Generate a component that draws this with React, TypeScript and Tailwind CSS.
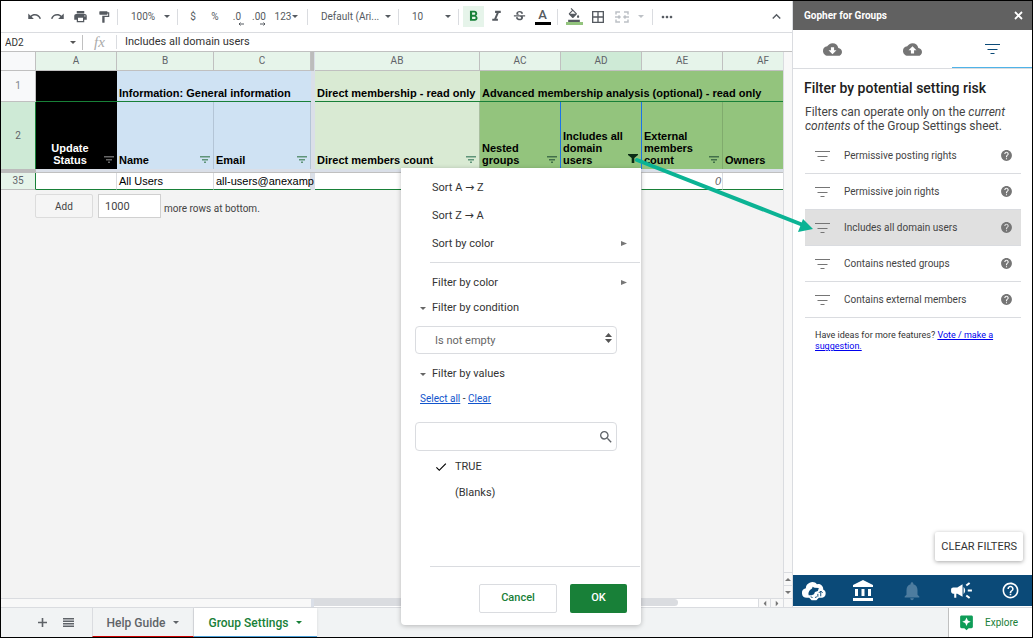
import { ReactNode } from "react";
import clsx from "clsx";
import {
  MdUndo,
  MdRedo,
  MdPrint,
  MdFormatPaint,
  MdFormatBold,
  MdFormatItalic,
  MdStrikethroughS,
  MdFormatColorFill,
  MdBorderAll,
  MdMoreHoriz,
  MdKeyboardArrowUp,
  MdCloudDownload,
  MdCloudUpload,
  MdHelp,
  MdHelpOutline,
  MdAccountBalance,
  MdNotifications,
  MdCampaign,
  MdAssistant,
  MdSearch,
  MdCheck,
} from "react-icons/md";

const risks = [
  "Permissive posting rights",
  "Permissive join rights",
  "Includes all domain users",
  "Contains nested groups",
  "Contains external members",
];

function Caret({ className }: { className?: string }) {
  return (
    <svg viewBox="0 0 6 3" className={clsx("h-[3px] w-[6px] shrink-0 pointer-events-none", className)} fill="currentColor">
      <path d="M0 0h6L3 3z" />
    </svg>
  );
}

function FilterLines({ className }: { className?: string }) {
  return (
    <svg viewBox="0 0 15 10" className={clsx("h-[10px] w-[15px] shrink-0", className)} stroke="currentColor">
      <path d="M0 .5h15M2.500 5.500h10M5.500 9.500h4" />
    </svg>
  );
}

function ColumnFilter({ label, active, className }: { label: string; active?: boolean; className?: string }) {
  return (
    <button aria-label={label} className={clsx("mb-[3px] shrink-0", className)}>
      {active ? (
        <svg viewBox="0 0 10 9" className="h-[9px] w-[10px]" fill="#0b2b14">
          <path d="M0 0h10v1L6.300 4v5H3.700V4L0 1z" />
        </svg>
      ) : (
        <svg viewBox="0 0 10 7" className="h-[7px] w-[10px]" fill="currentColor">
          <path d="M0 0h10v1.600H0zM2 3h6v1.400H2zM4 5.600h2V7H4z" />
        </svg>
      )}
    </button>
  );
}

function Tool({ label, wide, children }: { label: string; wide?: boolean; children: ReactNode }) {
  return (
    <button aria-label={label} className={clsx("flex h-6 items-center justify-center", wide ? "w-6" : "w-[23px]")}>
      {children}
    </button>
  );
}

function Divider() {
  return <span className="mx-[2px] h-4 w-px shrink-0 bg-[#dadce0]" />;
}

function ToolSelect({ label, value, className }: { label: string; value: string; className: string }) {
  return (
    <label className={clsx("flex items-center pl-[11px] pr-[5px]", className)}>
      <select aria-label={label} className="min-w-0 flex-1 appearance-none bg-transparent text-[10px] leading-4">
        <option>{value}</option>
      </select>
      <Caret />
    </label>
  );
}

function Toolbar() {
  return (
    <div className="flex h-8 items-center border-b border-[#dadce0] bg-white pl-[22px] text-[10px] text-[#555a60]">
      <Tool label="Undo"><MdUndo size={15} /></Tool>
      <Tool label="Redo"><MdRedo size={15} /></Tool>
      <Tool label="Print"><MdPrint size={15} /></Tool>
      <Tool label="Paint format"><MdFormatPaint size={14} /></Tool>
      <Divider />
      <ToolSelect label="Zoom" value="100%" className="w-[55px]" />
      <Divider />
      <div className="flex items-center px-[2px]">
        <button className="w-[22px]">$</button>
        <button className="w-[22px]">%</button>
        <button aria-label="Decrease decimal places" className="flex w-[22px] flex-col items-center pt-1 leading-[10px]">
          .0
          <svg viewBox="0 0 6 4" className="ml-2 h-1 w-[6px]" stroke="currentColor" fill="none"><path d="M6 2H1M2.500 .5L1 2l1.500 1.500" /></svg>
        </button>
        <button aria-label="Increase decimal places" className="flex w-[22px] flex-col items-center pt-1 leading-[10px]">
          .00
          <svg viewBox="0 0 6 4" className="ml-2 h-1 w-[6px]" stroke="currentColor" fill="none"><path d="M0 2h5M3.500 .5L5 2 3.500 3.500" /></svg>
        </button>
        <button className="flex w-[33px] items-center justify-center gap-px">123 <Caret /></button>
      </div>
      <Divider />
      <ToolSelect label="Font" value="Default (Ari..." className="w-[86px]" />
      <Divider />
      <ToolSelect label="Font size" value="10" className="w-[55px]" />
      <Divider />
      <div className="flex px-px">
        <button aria-label="Bold" className="mx-px flex h-[21px] w-[21px] items-center justify-center self-center bg-[#e6f4ea] text-[#188038]">
          <MdFormatBold size={17} />
        </button>
        <Tool label="Italic"><MdFormatItalic size={17} /></Tool>
        <Tool label="Strikethrough"><MdStrikethroughS size={15} /></Tool>
        <Tool label="Text color">
          <span className="w-4 border-b-[3px] border-black text-center text-[13px] font-medium leading-[14px]">A</span>
        </Tool>
      </div>
      <Divider />
      <div className="flex px-[2px]">
        <button aria-label="Fill color" className="flex h-6 w-6 flex-col items-center justify-center">
          <MdFormatColorFill size={16} className="h-[14px]" />
          <span className="h-[3px] w-[17px] bg-[#93c47d]" />
        </button>
        <Tool label="Borders" wide><MdBorderAll size={16} /></Tool>
        <button aria-label="Merge cells" className="flex h-6 w-[38px] items-center gap-[9px] pl-[5px] text-[#bdc1c6]">
          <svg viewBox="0 0 14 12" className="h-3 w-[14px]" fill="none" stroke="currentColor" strokeWidth="1.500">
            <path d="M1 3.500V1h4M9 1h4v2.500M1 8.500V11h4M9 11h4V8.500M0 6h5M3.500 4.500L5 6 3.500 7.500M14 6H9M10.500 4.500L9 6l1.500 1.500" />
          </svg>
          <Caret />
        </button>
      </div>
      <Divider />
      <Tool label="More" wide><MdMoreHoriz size={16} /></Tool>
      <button aria-label="Hide the menus" className="ml-auto mr-1 flex w-6 justify-center"><MdKeyboardArrowUp size={17} /></button>
    </div>
  );
}

function FormulaBar() {
  return (
    <div className="flex h-[19px] items-center border-b border-[#c0c0c0] bg-white text-[11px] text-[#333]">
      <label className="flex w-[82px] items-center border-r border-[#c0c0c0] pl-1 pr-[6px] text-[10px]">
        <input aria-label="Name box" defaultValue="AD2" className="min-w-0 flex-1 bg-transparent outline-none" />
        <Caret className="text-[#555]" />
      </label>
      <span className="w-[34px] border-r border-[#dadce0] text-center font-['Liberation_Serif',serif] text-[15px] italic leading-[14px] text-[#aaa]">fx</span>
      <input aria-label="Formula" defaultValue="Includes all domain users" className="min-w-0 flex-1 bg-transparent pl-2 outline-none" />
    </div>
  );
}

function ColHead({ name, active }: { name: string; active?: boolean }) {
  return (
    <th className={clsx("border-b border-r border-[#c0c0c0] text-[10px] font-normal text-[#5f6368] font-[Roboto,sans-serif]", active ? "bg-[#ceead6]" : "bg-[#e6f4ea]")}>
      {name}
    </th>
  );
}

function HeaderCell({ children, filter, className }: { children: ReactNode; filter?: ReactNode; className: string }) {
  return (
    <td className={clsx("border-r align-bottom", className)}>
      <div className="flex items-end justify-between pb-[3px] pl-[2px] pr-[3px]">
        <div>{children}</div>
        {filter}
      </div>
    </td>
  );
}

function Sheet() {
  return (
    <div className="min-w-0 flex-1 overflow-hidden bg-[#f3f3f3]">
      <table className="w-[803px] table-fixed border-separate border-spacing-0 font-['Liberation_Sans',Arial,sans-serif] text-[11px] leading-[12px] text-black">
        <colgroup>
          <col className="w-[35px]" />
          <col className="w-[81px]" />
          <col className="w-[97px]" />
          <col className="w-[97px]" />
          <col className="w-[4px]" />
          <col className="w-[165px]" />
          <col className="w-[81px]" />
          <col className="w-[81px]" />
          <col className="w-[81px]" />
          <col className="w-[81px]" />
        </colgroup>
        <thead>
          <tr className="h-[19px]">
            <th className="border-b border-r border-[#c0c0c0] bg-[#f8f9fa]" />
            <ColHead name="A" />
            <ColHead name="B" />
            <ColHead name="C" />
            <th className="border-r border-[#dadfe8] bg-[#bcbcbc]" />
            <ColHead name="AB" />
            <ColHead name="AC" />
            <ColHead name="AD" active />
            <ColHead name="AE" />
            <ColHead name="AF" />
          </tr>
        </thead>
        <tbody>
          <tr className="h-[31px] font-bold">
            <th className="border-b border-r border-[#c0c0c0] bg-[#f8f9fa] text-[10px] font-normal text-[#80868b] font-[Roboto,sans-serif]">1</th>
            <td className="border-b border-[#188038] bg-black" />
            <td colSpan={2} className="border-b border-[#188038] bg-[#cfe2f3] pb-[2px] pl-[2px] align-bottom">Information: General information</td>
            <td className="bg-[#dadfe8]" />
            <td className="border-b border-[#188038] bg-[#d9ead3] pb-[2px] pl-[2px] align-bottom">Direct membership - read only</td>
            <td colSpan={4} className="border-b border-[#188038] bg-[#93c47d] pb-[2px] pl-[2px] align-bottom">
              Advanced membership analysis (optional) - read only
            </td>
          </tr>
          <tr className="h-[67px] font-bold">
            <th className="border-r border-[#188038] bg-[#ceead6] text-[10px] font-normal text-[#5f6368] font-[Roboto,sans-serif]">2</th>
            <td className="bg-black align-bottom text-center text-white">
              <div className="flex items-end pb-[3px] pr-[3px]">
                <div className="flex-1 px-2">Update Status</div>
                <ColumnFilter label="Filter update status" className="text-[#666]" />
              </div>
            </td>
            <HeaderCell className="border-[#b4c5d6] bg-[#cfe2f3]" filter={<ColumnFilter label="Filter name" className="text-[#5f9479]" />}>Name</HeaderCell>
            <HeaderCell className="border-[#b4c5d6] bg-[#cfe2f3]" filter={<ColumnFilter label="Filter email" className="text-[#5f9479]" />}>Email</HeaderCell>
            <td className="bg-[#dadfe8]" />
            <HeaderCell className="border-[#a9bf9f] bg-[#d9ead3]" filter={<ColumnFilter label="Filter direct members" className="text-[#5f9479]" />}>Direct members count</HeaderCell>
            <HeaderCell className="border-[#1a73e8] bg-[#93c47d]" filter={<ColumnFilter label="Filter nested groups" className="text-[#42704a]" />}>Nested groups</HeaderCell>
            <HeaderCell className="border-[#1a73e8] bg-[#93c47d]" filter={<ColumnFilter label="Filter domain users" active />}>Includes all domain users</HeaderCell>
            <HeaderCell className="border-[#80ab6d] bg-[#93c47d]" filter={<ColumnFilter label="Filter external members" className="text-[#42704a]" />}>External members count</HeaderCell>
            <HeaderCell className="border-[#80ab6d] bg-[#93c47d]">Owners</HeaderCell>
          </tr>
          <tr className="h-1">
            <td className="bg-[#bcbcbc]" />
            <td colSpan={9} className="border-b border-[#c0c0c0] bg-[#dadfe8]" />
          </tr>
          <tr className="h-[17px]">
            <th className="border-b border-r border-b-[#c0c0c0] border-r-[#188038] bg-[#e6f4ea] text-[10px] font-normal text-[#5f6368] font-[Roboto,sans-serif]">35</th>
            <td className="border-b border-r border-b-[#188038] border-r-[#dadce0] bg-white" />
            <td className="border-b border-r border-b-[#188038] border-r-[#dadce0] bg-white pl-[2px]">All Users</td>
            <td className="whitespace-nowrap border-b border-r border-b-[#188038] border-r-[#dadce0] bg-white pl-[2px]">all-users@anexamp</td>
            <td className="bg-[#dadfe8]" />
            <td className="border-b border-r border-b-[#188038] border-r-[#dadce0] bg-white" />
            <td className="border-b border-r border-b-[#188038] border-r-[#dadce0] bg-white" />
            <td className="border-b border-r border-b-[#188038] border-r-[#dadce0] bg-white" />
            <td className="border-b border-r border-b-[#188038] border-r-[#dadce0] bg-white pr-px text-right italic text-[#666]">0</td>
            <td className="border-b border-r border-b-[#188038] border-r-[#dadce0] bg-white" />
          </tr>
        </tbody>
      </table>
      <div className="mt-1 flex items-center gap-[5px] pl-[34px] text-[10px] text-[#444]">
        <button className="h-6 w-[58px] rounded-xs border border-[#dcdcdc] bg-[#f5f5f5]">Add</button>
        <input id="more-rows" defaultValue="1000" className="h-6 w-[63px] border border-[#d0d0d0] bg-white pl-[6px] text-[11px]" />
        <label htmlFor="more-rows" className="-ml-[2px] pt-1">more rows at bottom.</label>
      </div>
    </div>
  );
}

function ScrollBars() {
  return (
    <div className="flex h-[9px] border-t border-[#dadce0] bg-white">
      <div className="w-[313px] border-r-[3px] border-[#dadfe8] bg-[#f8f8f8]" />
      <div className="flex-1">
        <div className="h-[7px] w-[82%] rounded-r-full bg-[#dadce0]" />
      </div>
      <div className="flex divide-x divide-[#dadce0] border-x border-[#dadce0] bg-[#f8f8f8] text-[#777]">
        <span className="flex w-3 items-center justify-center"><Caret className="rotate-90" /></span>
        <span className="flex w-3 items-center justify-center"><Caret className="-rotate-90" /></span>
      </div>
      <div className="w-2 bg-[#f8f8f8]" />
    </div>
  );
}

function MenuItem({ children, submenu }: { children: ReactNode; submenu?: boolean }) {
  return (
    <button className="flex h-7 w-full items-center justify-between pl-[31px] pr-[14px] text-left">
      <span>{children}</span>
      {submenu && (
        <svg viewBox="0 0 6 5" className="mb-[2px] h-[5px] w-[6px]" fill="#777"><path d="M0 0v5l6-2.500z" /></svg>
      )}
    </button>
  );
}

function MenuSection({ children }: { children: ReactNode }) {
  return (
    <button className="flex h-[22px] w-full items-center gap-[6px] pl-[19px] text-left">
      <Caret className="text-[#666]" />
      {children}
    </button>
  );
}

function Arrow() {
  return <span className="font-['DejaVu_Sans',sans-serif] leading-none">→</span>;
}

function FilterMenu() {
  return (
    <div className="absolute left-[400px] top-[167px] z-10 w-60 rounded-b-sm bg-white pb-3 pt-[6px] text-[11px] text-[#333] shadow-[0_1px_5px_rgba(0,0,0,0.25)]">
      <MenuItem>Sort A <Arrow /> Z</MenuItem>
      <MenuItem>Sort Z <Arrow /> A</MenuItem>
      <MenuItem submenu>Sort by color</MenuItem>
      <hr className="mb-[6px] ml-[29px] mr-px mt-1 border-[#dadce0]" />
      <MenuItem submenu>Filter by color</MenuItem>
      <MenuSection>Filter by condition</MenuSection>
      <label className="ml-[14px] mr-6 mt-[7px] flex h-7 items-center rounded-sm border border-[#dadce0] pl-[19px] pr-1 text-[#666]">
        <select aria-label="Condition" className="flex-1 appearance-none bg-transparent pt-[2px]">
          <option>Is not empty</option>
        </select>
        <svg viewBox="0 0 7 10" className="mb-[5px] h-[10px] w-[7px]" fill="#555"><path d="M0 4l3.500-4L7 4zM0 6h7l-3.500 4z" /></svg>
      </label>
      <div className="mt-[9px]"><MenuSection>Filter by values</MenuSection></div>
      <div className="mt-[6px] h-4 pl-[19px] text-[10px] leading-4">
        <a href="#" className="text-[#15c] underline">Select all</a> - <a href="#" className="text-[#15c] underline">Clear</a>
      </div>
      <label className="ml-[14px] mr-6 mt-[15px] flex h-[29px] items-center rounded-sm border border-[#dadce0] pr-[2px]">
        <input aria-label="Search values" className="min-w-0 flex-1 px-2 outline-none" />
        <MdSearch size={16} className="text-[#5f6368]" />
      </label>
      <div className="min-h-[115px] pt-[3px]">
        <button className="flex h-[26px] w-full items-center gap-[7px] pl-[33px]">
          <MdCheck size={14} className="text-black" />
          TRUE
        </button>
        <button className="flex h-[26px] w-full items-center pl-[54px]">(Blanks)</button>
      </div>
      <hr className="ml-[29px] mr-px border-[#dadce0]" />
      <div className="mt-[17px] flex justify-end gap-[13px] pr-[14px] font-medium">
        <button className="h-[29px] w-[78px] rounded-xs border border-[#dadce0] text-[#188038]">Cancel</button>
        <button className="h-[29px] w-[57px] rounded-xs bg-[#188038] text-white">OK</button>
      </div>
    </div>
  );
}

function GopherLogo() {
  return (
    <svg viewBox="0 0 27 20" className="h-5 w-[26px]">
      <path d="M6 17a5 5 0 0 1-1-9.900A6.500 6.500 0 0 1 9 1.500c3-1.500 6-.5 7.500 1.500a5 5 0 0 1 6.500 5.500A4.500 4.500 0 0 1 22 17h-3.500L16 19.500h-5L8.500 17z" fill="#fff" />
      <path d="M8 14.500c-1-3.500 1.500-6 3.500-7L12 5.500l2 1.200 4.500.3-1 3-3 1-1 2.500-2.500 1z" fill="#0b4a78" />
      <path d="M20.500 10v5.500M18.500 12l2-2 2 2M17.500 13v3" stroke="#0b4a78" fill="none" />
      <path d="M10 16l2 .800M16.500 16l-2 .800" stroke="#0b4a78" fill="none" />
    </svg>
  );
}

function Sidebar() {
  return (
    <aside className="flex w-[239px] shrink-0 flex-col bg-white pb-px">
      <header className="flex h-[29px] items-center justify-between bg-[#616161] pl-[11px] pr-[9px] text-white">
        <h1 className="text-[10px] font-bold">Gopher for Groups</h1>
        <button aria-label="Close">
          <svg viewBox="0 0 9 9" className="h-[9px] w-[9px]" stroke="currentColor" strokeWidth="1.800"><path d="M1 1l7 7M8 1L1 8" /></svg>
        </button>
      </header>
      <nav className="grid h-[39px] grid-cols-3 border-b border-[#dadce0] text-[#757575]">
        <button aria-label="Import" className="flex items-center justify-center"><MdCloudDownload size={19} /></button>
        <button aria-label="Export" className="flex items-center justify-center"><MdCloudUpload size={19} /></button>
        <button aria-label="Filter" className="flex items-center justify-center border-b border-[#4fb3e8] text-[#0b4a78]"><FilterLines /></button>
      </nav>
      <h2 className="pl-[11px] pt-[10px] text-[14px] font-medium leading-[18px] text-[#212121]">Filter by potential setting risk</h2>
      <p className="pl-3 pt-2 text-[12px] leading-[14px] text-[#444]">
        Filters can operate only on the <i>current<br />contents</i> of the Group Settings sheet.
      </p>
      <ul className="ml-3 mr-[11px] mt-[5px] text-[10px] text-[#444]">
        {risks.map((risk, i) => (
          <li key={risk} className={clsx("flex h-9 items-center border-b border-[#dadce0]", i === 2 && "bg-[#e0e0e0]")}>
            <button className="flex flex-1 items-center gap-[14px] pl-[10px] text-left">
              <FilterLines className="text-[#757575]" />
              {risk}
            </button>
            <button aria-label={"About " + risk} className="pr-2 text-[#757575]"><MdHelp size={13} /></button>
          </li>
        ))}
      </ul>
      <p className="pl-[22px] pr-5 pt-3 text-[9px] leading-[11px] text-[#333]">
        Have ideas for more features? <a href="#" className="text-[#00e] underline">Vote / make a suggestion.</a>
      </p>
      <button className="mb-[14px] ml-auto mr-[9px] mt-auto h-[29px] rounded-xs bg-white px-[6px] pt-px text-[11px] text-[#333] shadow-[0_1px_4px_rgba(0,0,0,0.35)]">
        CLEAR FILTERS
      </button>
      <footer className="flex h-[31px] items-center gap-[23px] bg-[#0b4a78] pl-2 text-white">
        <button aria-label="Gopher" className="w-[26px]"><GopherLogo /></button>
        <button aria-label="Organization" className="flex w-[26px] justify-center"><MdAccountBalance size={24} /></button>
        <button aria-label="Notifications" className="flex w-[26px] justify-center text-[#4d7c9f]"><MdNotifications size={22} /></button>
        <button aria-label="Announcements" className="flex w-[26px] justify-center"><MdCampaign size={25} /></button>
        <button aria-label="Help" className="flex w-[26px] justify-center"><MdHelpOutline size={19} /></button>
      </footer>
    </aside>
  );
}

function SheetTabs() {
  return (
    <footer className="flex h-[30px] border-t border-[#dadce0] bg-[#f1f3f4] text-[12px] font-medium text-[#5f6368]">
      <div className="flex w-[91px] items-center gap-4 pl-[37px]">
        <button aria-label="Add sheet">
          <svg viewBox="0 0 9 9" className="h-[9px] w-[9px]" stroke="currentColor" strokeWidth="1.600"><path d="M4.500 0v9M0 4.500h9" /></svg>
        </button>
        <button aria-label="All sheets">
          <svg viewBox="0 0 11 9" className="h-[9px] w-[11px]" fill="currentColor">
            <path d="M0 0h11v1.400H0zM0 2.500h11v1.400H0zM0 5h11v1.400H0zM0 7.500h11v1.400H0z" />
          </svg>
        </button>
      </div>
      <button className="flex w-[102px] items-center justify-center gap-2 border-x border-b border-x-[#dadce0] border-b-[#c00] pt-px">
        Help Guide <Caret />
      </button>
      <button className="flex w-[123px] items-center justify-center gap-2 border-b border-[#4a9fd8] bg-white pt-px text-[#188038] shadow-sm">
        Group Settings <Caret />
      </button>
      <button className="ml-auto flex w-[84px] items-center gap-[10px] border-l border-[#c0c0c0] bg-white pl-[9px] text-[10px] font-normal text-[#188038]">
        <MdAssistant size={17} className="text-[#0f9d58]" />
        Explore
      </button>
    </footer>
  );
}

export default function App() {
  return (
    <div className="relative flex min-h-screen flex-col overflow-hidden border border-black bg-white font-[Roboto,Arial,sans-serif]">
      <main className="flex flex-1">
        <div className="flex min-w-0 flex-1 flex-col border-r border-[#dadce0]">
          <Toolbar />
          <FormulaBar />
          <div className="flex flex-1">
            <Sheet />
            <div className="flex w-[9px] shrink-0 flex-col justify-end border-l border-[#dadce0] bg-[#f8f8f8] text-[#777]">
              <span className="flex h-[13px] items-center justify-center border-t border-[#dadce0]"><Caret className="rotate-180" /></span>
              <span className="flex h-[13px] items-center justify-center border-t border-[#dadce0]"><Caret /></span>
            </div>
          </div>
          <ScrollBars />
        </div>
        <Sidebar />
      </main>
      <SheetTabs />
      <FilterMenu />

      {/* Callout arrow from the column filter to the sidebar rule */}
      <svg viewBox="0 0 180 76" className="pointer-events-none absolute left-[633px] top-[156px] z-20 h-[76px] w-[180px]">
        <path d="M3 3l166 65" stroke="#0bb394" strokeWidth="4" strokeLinecap="round" />
        <path d="M179 72l-15 3 5-13z" fill="#0bb394" />
      </svg>
    </div>
  );
}
